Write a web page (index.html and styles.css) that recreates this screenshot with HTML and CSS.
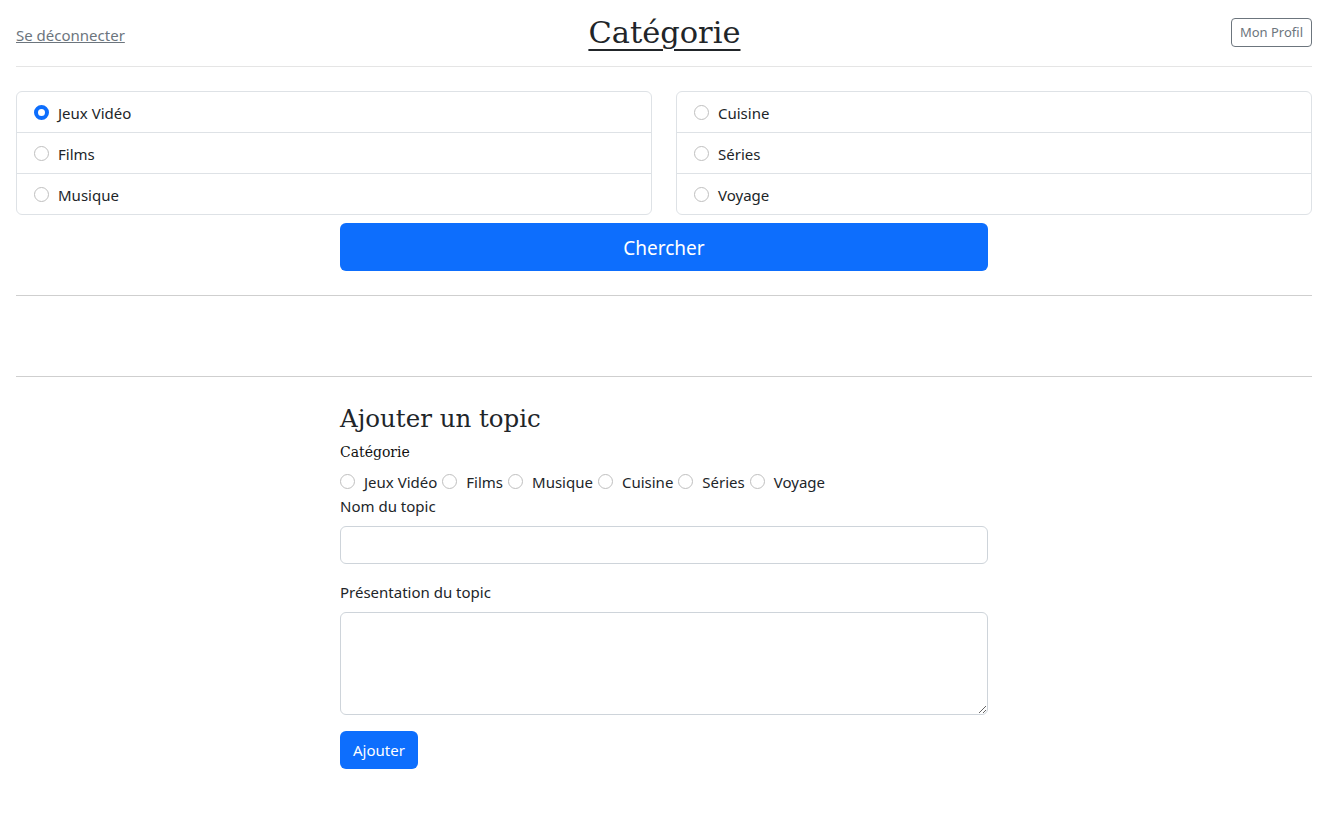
FILE: index.html
```html
<!DOCTYPE html>
<html lang="fr">
<head>
<meta charset="utf-8">
<title>Catégorie</title>
<link rel="stylesheet" href="styles.css">
</head>
<body>
<header class="topbar">
  <a class="logout" href="#">Se déconnecter</a>
  <h1 class="title">Catégorie</h1>
  <button class="btn-profile" type="button">Mon Profil</button>
</header>
<hr class="hr-light">

<form class="search">
  <div class="lists">
    <ul class="list-group">
      <li class="list-item"><label class="check"><input type="radio" name="cat" checked><span>Jeux Vidéo</span></label></li>
      <li class="list-item"><label class="check"><input type="radio" name="cat"><span>Films</span></label></li>
      <li class="list-item"><label class="check"><input type="radio" name="cat"><span>Musique</span></label></li>
    </ul>
    <ul class="list-group">
      <li class="list-item"><label class="check"><input type="radio" name="cat"><span>Cuisine</span></label></li>
      <li class="list-item"><label class="check"><input type="radio" name="cat"><span>Séries</span></label></li>
      <li class="list-item"><label class="check"><input type="radio" name="cat"><span>Voyage</span></label></li>
    </ul>
  </div>
  <button class="btn-search" type="button">Chercher</button>
</form>

<hr class="hr-dark">
<div class="spacer"></div>
<hr class="hr-dark">

<form class="add">
  <h2 class="add-title">Ajouter un topic</h2>
  <div class="label-serif">Catégorie</div>
  <div class="inline-radios">
    <label class="check-inline"><input type="radio" name="newcat"><span>Jeux Vidéo</span></label>
    <label class="check-inline"><input type="radio" name="newcat"><span>Films</span></label>
    <label class="check-inline"><input type="radio" name="newcat"><span>Musique</span></label>
    <label class="check-inline"><input type="radio" name="newcat"><span>Cuisine</span></label>
    <label class="check-inline"><input type="radio" name="newcat"><span>Séries</span></label>
    <label class="check-inline"><input type="radio" name="newcat"><span>Voyage</span></label>
  </div>
  <label class="field-label" for="nom">Nom du topic</label>
  <input class="field" id="nom" type="text">
  <label class="field-label second" for="pres">Présentation du topic</label>
  <textarea class="field area" id="pres"></textarea>
  <button class="btn-add" type="button">Ajouter</button>
</form>
</body>
</html>
```

FILE: styles.css
```css
* { box-sizing: border-box; }
html, body { margin: 0; }
body {
  padding: 0 12px 0 16px;
  font-family: "Noto Sans", "Open Sans", sans-serif;
  font-size: 15px;
  line-height: 1.5;
  color: #212529;
  background: #fff;
}
.topbar {
  height: 66px;
  display: flex;
  align-items: center;
  justify-content: space-between;
}
.logout {
  color: #6c757d;
  font-size: 15px;
  text-decoration: underline;
  width: 200px;
  padding-top: 4px;
}
.title {
  margin: 0;
  font-family: "DejaVu Serif", Georgia, serif;
  font-weight: 400;
  font-size: 30.5px;
  line-height: 1.2;
  text-decoration: underline;
  text-decoration-thickness: 2px;
  text-underline-offset: 6px;
}
.btn-profile {
  margin-left: 118px;
  font-family: "Noto Sans", sans-serif;
  font-size: 13px;
  color: #6c757d;
  background: #fff;
  border: 1px solid #6c757d;
  border-radius: 4px;
  padding: 4px 8px;
  line-height: 1.5;
  margin-top: -1px;
}
hr { margin: 0; border: 0; border-top: 1px solid; }
.hr-light { border-top-color: #e5e5e5; }
.hr-dark { border-top-color: #cfcfcf; }

.search { padding-top: 24px; padding-bottom: 24px; }
.lists {
  display: grid;
  grid-template-columns: 1fr 1fr;
  gap: 24px;
}
.list-group {
  list-style: none;
  margin: 0;
  padding: 0;
  border: 1px solid #dee2e6;
  border-radius: 6px;
}
.list-item {
  padding: 8px 16px;
  height: 41px;
  border-top: 1px solid #dee2e6;
}
.list-item:first-child { border-top: none; height: 40px; }
.check, .check-inline {
  display: inline-flex;
  align-items: center;
  line-height: 24px;
}
.check span, .check-inline span { padding-top: 1px; }
input[type="radio"] {
  appearance: none;
  -webkit-appearance: none;
  width: 15px;
  height: 15px;
  margin: 0 9px 0 1px;
  border: 1px solid #bfbfbf;
  border-radius: 50%;
  background: #fff;
  flex: none;
}
input[type="radio"]:checked {
  border: 4px solid #0d6efd;
  background: #fff;
}
.btn-search {
  display: block;
  width: 648px;
  height: 48px;
  margin: 8px auto 0;
  padding-top: 3px;
  border: none;
  border-radius: 6px;
  background: #0d6efd;
  color: #fff;
  font-family: "Noto Sans", sans-serif;
  font-size: 19px;
}
.spacer { height: 80px; }

.add {
  width: 648px;
  margin: 0 auto;
  display: flex;
  flex-direction: column;
  align-items: flex-start;
}
.add-title {
  margin: 27px 0 7px;
  font-family: "DejaVu Serif", Georgia, serif;
  font-weight: 400;
  font-size: 24.5px;
  line-height: 1.2;
}
.label-serif {
  font-family: "DejaVu Serif", Georgia, serif;
  font-size: 14px;
  line-height: 24px;
  margin-bottom: 5px;
  color: #111;
}
.inline-radios {
  display: flex;
  gap: 5px;
  line-height: 24px;
}
.check-inline input[type="radio"] { margin: 0 9px 0 0; }
.field-label { line-height: 24px; margin-bottom: 8px; }
.field-label.second { margin-top: 16px; }
.field {
  width: 100%;
  height: 38px;
  border: 1px solid #ced4da;
  border-radius: 6px;
  padding: 6px 12px;
  font: inherit;
}
.area { height: 103px; resize: vertical; }
.btn-add {
  margin-top: 16px;
  height: 38px;
  padding: 6px 13px;
  border: none;
  border-radius: 6px;
  background: #0d6efd;
  color: #fff;
  font-family: "Noto Sans", sans-serif;
  font-size: 15px;
}
```
